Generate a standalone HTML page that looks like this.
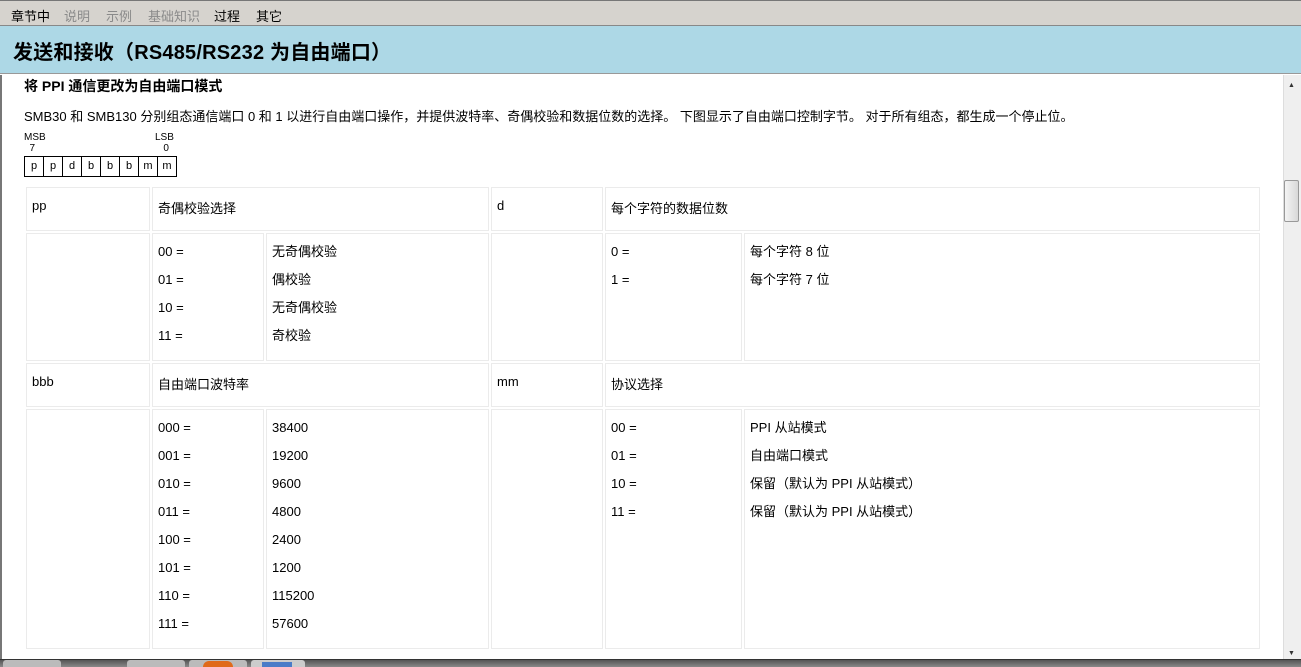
<!DOCTYPE html>
<html><head><meta charset="utf-8"><style>
*{margin:0;padding:0;box-sizing:border-box}
body{width:1301px;height:667px;position:relative;overflow:hidden;background:#fff;font-family:"Liberation Sans","Noto Sans CJK SC",sans-serif;font-size:13px;color:#000}
.a{position:absolute;white-space:nowrap}
.c{position:absolute;border:1px solid #ebebeb}
#menu{left:0;top:0;width:1301px;height:26px;background:#d6d3ce;border-top:1px solid #777;border-bottom:1px solid #888;font-size:13px}
#menu span{position:absolute;top:5px}
.g{color:#8a8a8a}
#hd{left:0;top:26px;width:1301px;height:48px;background:#add8e6;border-bottom:1px solid #999}
#hd div{position:absolute;left:13px;top:10px;font-size:20px;font-weight:bold;white-space:nowrap;letter-spacing:0.2px}
.bits{position:absolute;left:24px;top:156px;display:flex;border:1px solid #000}
.bits span{width:19px;height:19px;border-left:1px solid #000;text-align:center;font-size:11px;line-height:18px}
.bits span:first-child{border-left:none;width:18px}
</style></head><body>
<div class="a" id="menu"><span style="left:11px">章节中</span><span class="g" style="left:64px">说明</span><span class="g" style="left:106px">示例</span><span class="g" style="left:148px">基础知识</span><span style="left:214px">过程</span><span style="left:256px">其它</span></div>
<div class="a" id="hd"><div>发送和接收（RS485/RS232 为自由端口）</div></div>
<div class="a" style="left:0;top:75px;width:2px;height:584px;background:#777"></div>
<div class="a" style="left:1283px;top:75px;width:18px;height:584px;background:#efefef;border-left:1px solid #ddd"></div>
<div class="a" style="left:1288px;top:82px;font-size:7px;color:#333">▲</div>
<div class="a" style="left:1284px;top:180px;width:15px;height:42px;background:linear-gradient(90deg,#f4f4f4,#d8d8d8);border:1px solid #999;border-radius:2px"></div>
<div class="a" style="left:1288px;top:650px;font-size:7px;color:#333">▼</div>
<div class="a" style="left:24px;top:76px;font-size:14px;font-weight:bold">将 PPI 通信更改为自由端口模式</div>
<div class="a" style="left:24px;top:106px">SMB30 和 SMB130 分别组态通信端口 0 和 1 以进行自由端口操作，并提供波特率、奇偶校验和数据位数的选择。 下图显示了自由端口控制字节。 对于所有组态，都生成一个停止位。</div>
<div class="a" style="left:24px;top:132px;font-size:10px;line-height:11px">MSB<br>&nbsp;&nbsp;7</div>
<div class="a" style="left:155px;top:132px;font-size:10px;line-height:11px">LSB<br>&nbsp;&nbsp;&nbsp;0</div>
<div class="bits"><span>p</span><span>p</span><span>d</span><span>b</span><span>b</span><span>b</span><span>m</span><span>m</span></div>

<div class="c" style="left:26px;top:187px;width:124px;height:44px"></div>
<div class="c" style="left:152px;top:187px;width:337px;height:44px"></div>
<div class="c" style="left:491px;top:187px;width:112px;height:44px"></div>
<div class="c" style="left:605px;top:187px;width:655px;height:44px"></div>
<div class="c" style="left:26px;top:233px;width:124px;height:128px"></div>
<div class="c" style="left:152px;top:233px;width:112px;height:128px"></div>
<div class="c" style="left:266px;top:233px;width:223px;height:128px"></div>
<div class="c" style="left:491px;top:233px;width:112px;height:128px"></div>
<div class="c" style="left:605px;top:233px;width:137px;height:128px"></div>
<div class="c" style="left:744px;top:233px;width:516px;height:128px"></div>
<div class="c" style="left:26px;top:363px;width:124px;height:44px"></div>
<div class="c" style="left:152px;top:363px;width:337px;height:44px"></div>
<div class="c" style="left:491px;top:363px;width:112px;height:44px"></div>
<div class="c" style="left:605px;top:363px;width:655px;height:44px"></div>
<div class="c" style="left:26px;top:409px;width:124px;height:240px"></div>
<div class="c" style="left:152px;top:409px;width:112px;height:240px"></div>
<div class="c" style="left:266px;top:409px;width:223px;height:240px"></div>
<div class="c" style="left:491px;top:409px;width:112px;height:240px"></div>
<div class="c" style="left:605px;top:409px;width:137px;height:240px"></div>
<div class="c" style="left:744px;top:409px;width:516px;height:240px"></div>

<div class="a" style="left:32px;top:198px">pp</div>
<div class="a" style="left:158px;top:198px">奇偶校验选择</div>
<div class="a" style="left:497px;top:198px">d</div>
<div class="a" style="left:611px;top:198px">每个字符的数据位数</div>
<div class="a" style="left:158px;top:238px;line-height:28px">00 =<br>01 =<br>10 =<br>11 =</div>
<div class="a" style="left:272px;top:238px;line-height:28px">无奇偶校验<br>偶校验<br>无奇偶校验<br>奇校验</div>
<div class="a" style="left:611px;top:238px;line-height:28px">0 =<br>1 =</div>
<div class="a" style="left:750px;top:238px;line-height:28px">每个字符 8 位<br>每个字符 7 位</div>
<div class="a" style="left:32px;top:374px">bbb</div>
<div class="a" style="left:158px;top:374px">自由端口波特率</div>
<div class="a" style="left:497px;top:374px">mm</div>
<div class="a" style="left:611px;top:374px">协议选择</div>
<div class="a" style="left:158px;top:414px;line-height:28px">000 =<br>001 =<br>010 =<br>011 =<br>100 =<br>101 =<br>110 =<br>111 =</div>
<div class="a" style="left:272px;top:414px;line-height:28px">38400<br>19200<br>9600<br>4800<br>2400<br>1200<br>115200<br>57600</div>
<div class="a" style="left:611px;top:414px;line-height:28px">00 =<br>01 =<br>10 =<br>11 =</div>
<div class="a" style="left:750px;top:414px;line-height:28px">PPI 从站模式<br>自由端口模式<br>保留（默认为 PPI 从站模式）<br>保留（默认为 PPI 从站模式）</div>

<div class="a" style="left:0;top:659px;width:1301px;height:8px;background:linear-gradient(#555,#888);border-top:1px solid #333"></div>
<div class="a" style="left:3px;top:660px;width:58px;height:7px;background:#bbb;border-radius:3px 3px 0 0"></div>
<div class="a" style="left:127px;top:660px;width:58px;height:7px;background:#bbb;border-radius:3px 3px 0 0"></div>
<div class="a" style="left:189px;top:660px;width:58px;height:7px;background:#bbb;border-radius:3px 3px 0 0"></div>
<div class="a" style="left:203px;top:661px;width:30px;height:6px;background:#e06a1a;border-radius:6px 6px 0 0"></div>
<div class="a" style="left:251px;top:660px;width:54px;height:7px;background:#ccc;border-radius:3px 3px 0 0"></div>
<div class="a" style="left:262px;top:662px;width:30px;height:5px;background:#4a7cc8"></div>
</body></html>
